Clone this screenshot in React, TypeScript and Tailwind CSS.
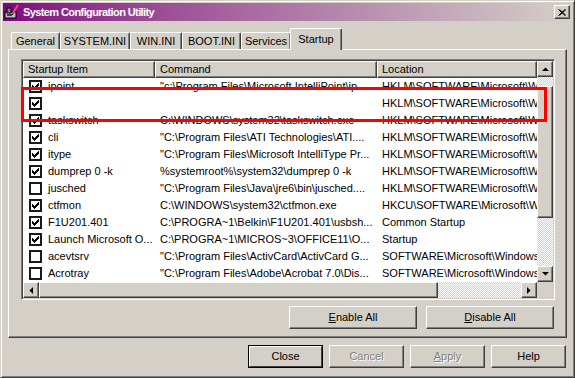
import React from 'react'

type Row = { name: string; on: boolean; cmd: string; loc: string }

const HKLM = 'HKLM\\SOFTWARE\\Microsoft\\Windows\\CurrentVersion\\Run'

const rows: Row[] = [
  { name: 'ipoint', on: true, cmd: '"c:\\Program Files\\Microsoft IntelliPoint\\ip...', loc: HKLM },
  { name: '', on: true, cmd: '', loc: HKLM },
  { name: 'taskswitch', on: true, cmd: 'C:\\WINDOWS\\system32\\taskswitch.exe', loc: HKLM },
  { name: 'cli', on: true, cmd: '"C:\\Program Files\\ATI Technologies\\ATI....', loc: HKLM },
  { name: 'itype', on: true, cmd: '"C:\\Program Files\\Microsoft IntelliType Pr...', loc: HKLM },
  { name: 'dumprep 0 -k', on: true, cmd: '%systemroot%\\system32\\dumprep 0 -k', loc: HKLM },
  { name: 'jusched', on: false, cmd: '"C:\\Program Files\\Java\\jre6\\bin\\jusched....', loc: HKLM },
  { name: 'ctfmon', on: true, cmd: 'C:\\WINDOWS\\system32\\ctfmon.exe', loc: 'HKCU\\SOFTWARE\\Microsoft\\Windows\\CurrentVersion\\Run' },
  { name: 'F1U201.401', on: true, cmd: 'C:\\PROGRA~1\\Belkin\\F1U201.401\\usbsh...', loc: 'Common Startup' },
  { name: 'Launch Microsoft O...', on: true, cmd: 'C:\\PROGRA~1\\MICROS~3\\OFFICE11\\O...', loc: 'Startup' },
  { name: 'acevtsrv', on: false, cmd: '"C:\\Program Files\\ActivCard\\ActivCard G...', loc: 'SOFTWARE\\Microsoft\\Windows\\CurrentVersion\\Run' },
  { name: 'Acrotray', on: false, cmd: '"C:\\Program Files\\Adobe\\Acrobat 7.0\\Dis...', loc: 'SOFTWARE\\Microsoft\\Windows\\CurrentVersion\\Run' },
]

const raised =
  'bg-[#d4d0c8] border border-t-white border-l-white border-r-[#404040] border-b-[#404040] shadow-[inset_-1px_-1px_0_#808080]'

const checker =
  'bg-[image:repeating-conic-gradient(#d4d0c8_0_25%,#ffffff_0_50%)] bg-[length:2px_2px]'

function Check({ on }: { on: boolean }) {
  return (
    <span className="w-[13px] h-[13px] border-2 border-[#1a1a1a] bg-white flex items-center justify-center shrink-0">
      {on && (
        <svg width="7" height="7" viewBox="0 0 7 7">
          {[2, 3, 4, 3, 2, 1, 0].map((y, x) => (
            <rect key={x} x={x} y={y} width="1" height="3" fill="#000" />
          ))}
        </svg>
      )}
    </span>
  )
}

function Arrow({ dir }: { dir: 'up' | 'down' | 'left' | 'right' }) {
  const pts = {
    up: '0,4 7,4 3.5,0.5',
    down: '0,0 7,0 3.5,3.5',
    left: '4,0 4,7 0.5,3.5',
    right: '0,0 0,7 3.5,3.5',
  }[dir]
  const vert = dir === 'up' || dir === 'down'
  return (
    <div className={`${raised} w-[16px] h-[16px] flex items-center justify-center shrink-0`}>
      <svg width={vert ? 7 : 4} height={vert ? 4 : 7} viewBox={vert ? '0 0 7 4' : '0 0 4 7'}>
        <polygon points={pts} fill="#000" />
      </svg>
    </div>
  )
}

function Btn({ children, disabled, w = 'w-[75px]' }: { children: React.ReactNode; disabled?: boolean; w?: string }) {
  return (
    <div
      className={`${raised} ${w} h-[23px] flex items-center justify-center ${
        disabled ? 'text-[#808080] [text-shadow:1px_1px_0_#ffffff]' : 'text-black'
      }`}
    >
      {children}
    </div>
  )
}

export default function App() {
  return (
    <div className="relative w-[575px] h-[378px] bg-[#d4d0c8] border border-t-[#d4d0c8] border-l-[#d4d0c8] border-r-[#404040] border-b-[#404040] shadow-[inset_1px_1px_0_#ffffff,inset_-1px_-1px_0_#808080] p-[2px] font-['Liberation_Sans',Arial,sans-serif] text-[11px] text-black select-none">
      {/* Title bar */}
      <div className="h-[18px] flex items-center bg-linear-to-r from-[#800080] to-[#d4d0c8] pl-[1px] pr-[2px]">
        <svg width="16" height="16" viewBox="0 0 16 16" className="shrink-0">
          <rect x="1" y="8" width="11" height="6" fill="#c0c0c0" stroke="#000" strokeWidth="1" />
          <rect x="3" y="4" width="4" height="5" fill="#808080" stroke="#000" strokeWidth="1" />
          <rect x="3" y="10" width="5" height="2" fill="#404040" />
          <line x1="8.5" y1="10" x2="14" y2="1" stroke="#ff3c7c" strokeWidth="2" />
          <line x1="8" y1="11" x2="9" y2="9.5" stroke="#000" strokeWidth="1" />
        </svg>
        <span className="ml-[3px] text-white font-bold text-[11px] tracking-[-0.6px] flex-1 whitespace-nowrap">
          System Configuration Utility
        </span>
        <div className={`${raised} w-[16px] h-[14px] flex items-center justify-center`}>
          <svg width="8" height="7" viewBox="0 0 8 7">
            <path d="M0.5 0.5 L7 6.5 M1.5 0.5 L8 6.5 M7 0.5 L0.5 6.5 M8 0.5 L1.5 6.5" stroke="#000" strokeWidth="1" />
          </svg>
        </div>
      </div>

      <div className="px-[5px]">
        {/* Tabs */}
        <div className="mt-[7px] h-[21px] flex items-end pl-[3px]">
          {[
            ['General', 'w-[49px]'],
            ['SYSTEM.INI', 'w-[70px]'],
            ['WIN.INI', 'w-[52px]'],
            ['BOOT.INI', 'w-[59px]'],
            ['Services', 'w-[50px]'],
          ].map(([t, w]) => (
            <div
              key={t}
              className={`${w} h-[17px] flex items-center justify-center border-l border-t border-r border-l-white border-t-white border-r-[#404040] rounded-t-[2px] shadow-[inset_-1px_0_0_#808080]`}
            >
              {t}
            </div>
          ))}
          <div className="relative z-10 w-[52px] h-[22px] -mb-[1px] -ml-[1px] bg-[#d4d0c8] flex items-center justify-center pb-[1px] border-l border-t border-r border-l-white border-t-white border-r-[#404040] rounded-t-[2px] shadow-[inset_-1px_0_0_#808080]">
            Startup
          </div>
        </div>

        {/* Panel */}
        <div className="h-[289px] border border-t-white border-l-white border-r-[#404040] border-b-[#404040] shadow-[inset_-1px_-1px_0_#808080] pt-[9px] pl-[12px]">
          {/* List view */}
          <div className="w-[534px] h-[241px] border border-t-[#808080] border-l-[#808080] border-r-white border-b-white shadow-[inset_1px_1px_0_#404040,inset_-1px_-1px_0_#d4d0c8] p-[1px]">
            <div className="grid grid-cols-[514px_16px] grid-rows-[221px_16px]">
              <div className="bg-white overflow-hidden">
                <div className="flex h-[17px]">
                  {[
                    ['Startup Item', 'w-[132px]'],
                    ['Command', 'w-[222px]'],
                    ['Location', 'w-[160px]'],
                  ].map(([t, w]) => (
                    <div key={t} className={`${raised} ${w} shrink-0 flex items-center pl-[4px] whitespace-nowrap`}>
                      {t}
                    </div>
                  ))}
                </div>
                {rows.map((r, i) => (
                  <div key={i} className="flex h-[17px] items-center whitespace-nowrap">
                    <div className="w-[132px] shrink-0 flex items-center pl-[6px] gap-[6px] overflow-hidden">
                      <Check on={r.on} />
                      <span>{r.name}</span>
                    </div>
                    <div className="w-[222px] shrink-0 pl-[5px] overflow-hidden">{r.cmd}</div>
                    <div className="w-[160px] shrink-0 pl-[5px] overflow-hidden">{r.loc}</div>
                  </div>
                ))}
              </div>

              {/* Vertical scrollbar */}
              <div className="flex flex-col">
                <Arrow dir="up" />
                <div className={`flex-1 ${checker} pt-[9px]`}>
                  <div className={`${raised} h-[132px]`} />
                </div>
                <Arrow dir="down" />
              </div>

              {/* Horizontal scrollbar */}
              <div className="flex">
                <Arrow dir="left" />
                <div className={`${raised} w-[399px] h-[16px]`} />
                <div className={`flex-1 ${checker}`} />
                <Arrow dir="right" />
              </div>
              <div className="bg-[#d4d0c8]" />
            </div>
          </div>

          <div className="w-[534px] mt-[6px] pr-[1px] flex justify-end gap-[9px]">
            <Btn w="w-[128px]">
              <span>
                <span className="underline">E</span>nable All
              </span>
            </Btn>
            <Btn w="w-[128px]">
              <span>
                <span className="underline">D</span>isable All
              </span>
            </Btn>
          </div>
        </div>

        {/* Dialog buttons */}
        <div className="mt-[7px] flex justify-end gap-[6px] pr-[1px]">
          <div className="w-[75px] h-[23px] border border-black">
            <div className="w-full h-full bg-[#d4d0c8] border border-t-white border-l-white border-r-[#404040] border-b-[#404040] flex items-center justify-center">
              Close
            </div>
          </div>
          <Btn disabled>Cancel</Btn>
          <Btn disabled>
            <span>
              <span className="underline">A</span>pply
            </span>
          </Btn>
          <Btn>Help</Btn>
        </div>
      </div>

      {/* Highlight box */}
      <div className="absolute left-[20px] top-[86px] w-[526px] h-[35px] border-[3px] border-[#ff0000] pointer-events-none" />
    </div>
  )
}
